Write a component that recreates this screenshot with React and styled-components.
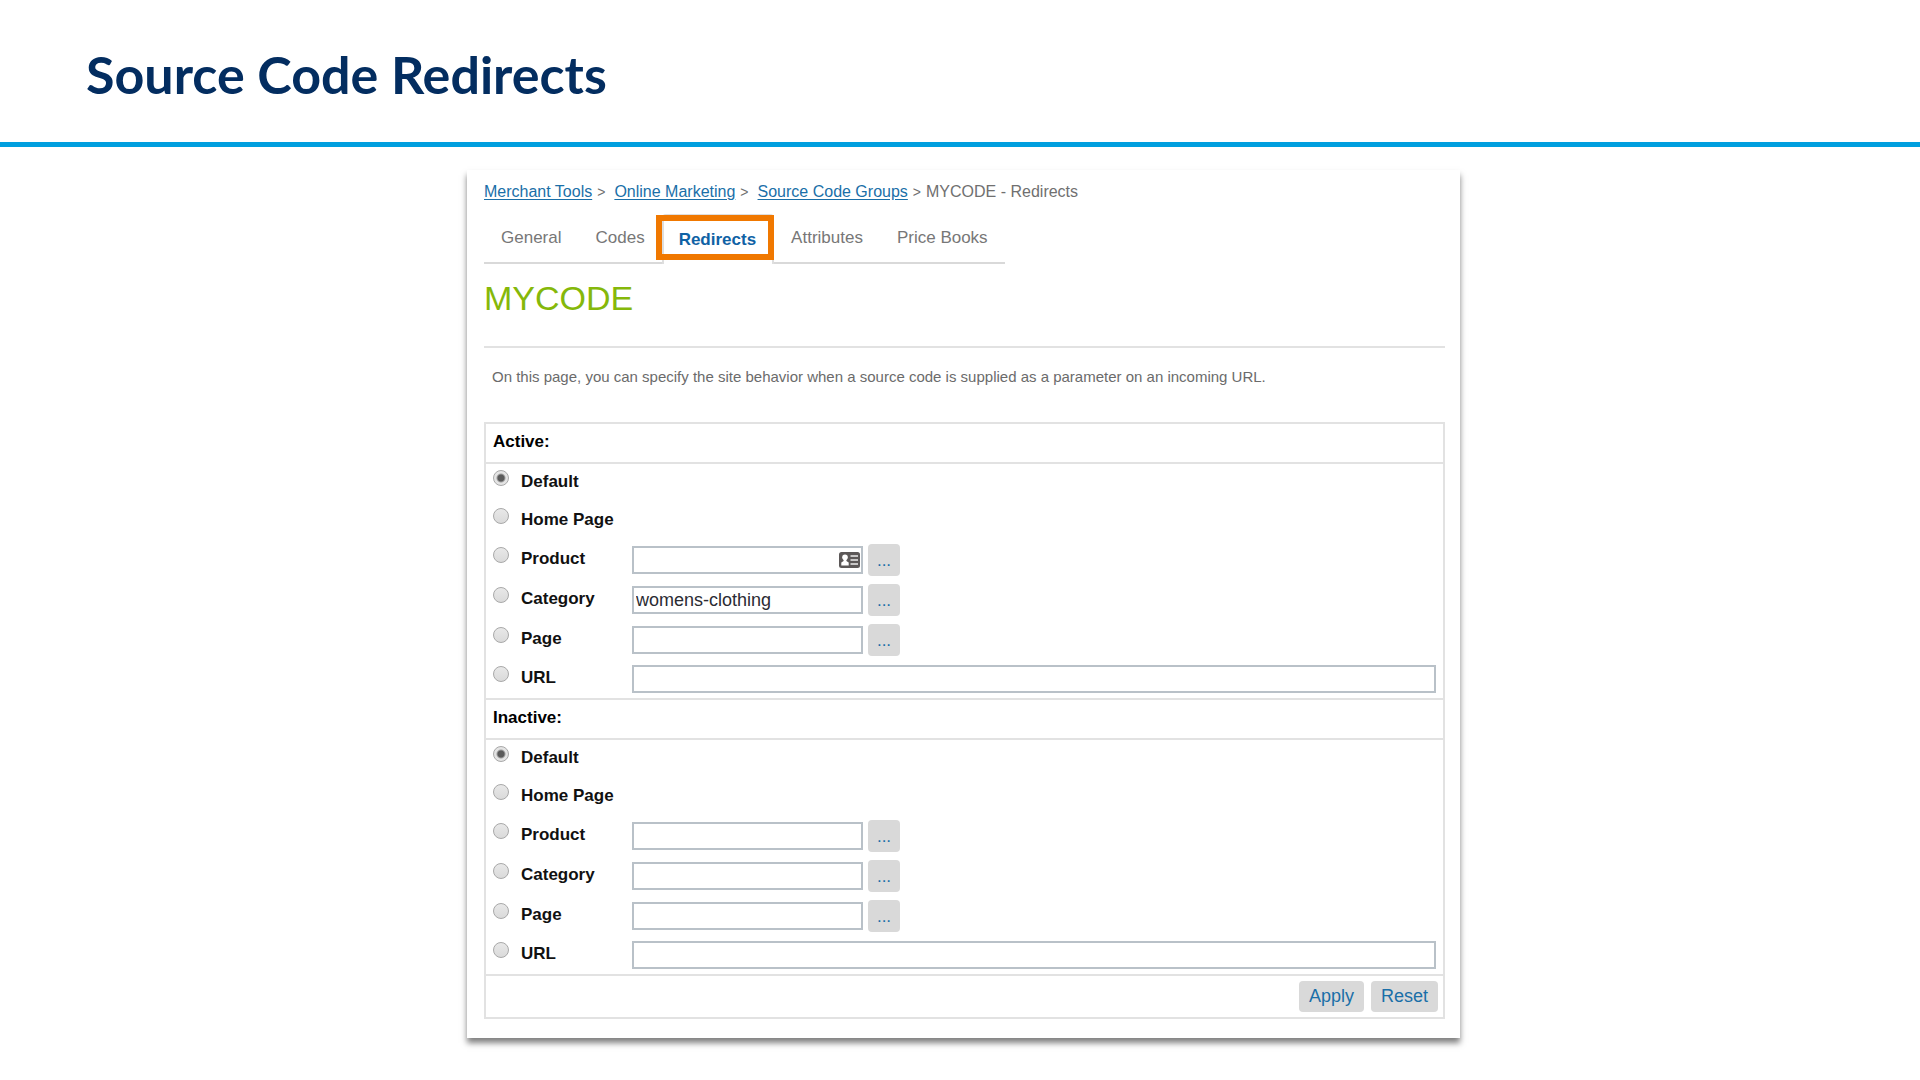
import React, { useState } from "react";
import styled, { createGlobalStyle } from "styled-components";

const GlobalStyle = createGlobalStyle`
  * {
    box-sizing: border-box;
  }
  body {
    margin: 0;
    background-color: white;
    font-family: "Liberation Sans", Arial, sans-serif;
  }
`;

const Header = styled.header`
  height: 147px;
  display: flex;
  align-items: center;
  padding: 6px 86px 0px;
  border-bottom: 5px solid #009fdf;
`;

const SlideTitle = styled.h1`
  margin: 0px;
  font-family: Lato, Carlito, Calibri, sans-serif;
  font-size: 52px;
  font-weight: 700;
  line-height: 60px;
  color: #032d60;
`;

const Main = styled.main`
  padding: 23px 460px 30px 467px;
`;

const Card = styled.section`
  padding: 10px 15px 19px 17px;
  background-color: white;
  box-shadow: 0px 5px 6px rgba(0, 0, 0, 0.5);
`;

const Breadcrumb = styled.nav`
  display: flex;
  gap: 5px;
  font-size: 16px;
  line-height: 24px;
  white-space: nowrap;
  color: #707070;
`;

const Crumb = styled.a`
  color: #1a6fa8;
  text-decoration: underline;
  text-underline-offset: 2px;
`;

const Separator = styled.span`
  font-size: 14px;
  margin-right: ${(props) => (props.$wide ? "4px" : "0px")};
`;

const Tabs = styled.nav`
  display: flex;
  width: fit-content;
  margin-top: 10px;
`;

const Tab = styled.a`
  position: relative;
  height: 50px;
  padding: 0px 17px;
  font-size: 17px;
  line-height: 48px;
  text-decoration: none;
  white-space: nowrap;
  font-weight: ${(props) => (props.$active ? 700 : 400)};
  color: ${(props) => (props.$active ? "#0f62a5" : "#777777")};
  border: 2px solid transparent;
  border-bottom-color: #d9d9d9;
  border-width: 0px 0px 2px;
  ${(props) =>
    props.$active &&
    `
    padding: 0px 16px 0px 15px;
    border-width: 2px 2px 0px;
    border-color: #dedede;
    border-radius: 4px 4px 0px 0px;
  `}
`;

const Highlight = styled.span`
  position: absolute;
  top: -1px;
  left: -8px;
  right: -2px;
  height: 45px;
  border: 6px solid #f07800;
`;

const GroupName = styled.h2`
  margin: 14px 0px 0px;
  padding-bottom: 28px;
  font-size: 34px;
  font-weight: 400;
  line-height: 40px;
  color: #85b80a;
  border-bottom: 2px solid #e2e2e2;
`;

const Description = styled.p`
  margin: 18px 8px 34px;
  font-size: 15px;
  line-height: 22px;
  color: #6b6b6b;
`;

const Form = styled.form`
  border: 2px solid #e2e2e2;
`;

const GroupTitle = styled.h3`
  margin: 0px;
  padding: 0px 7px;
  font-size: 17px;
  line-height: 36px;
  height: 40px;
  border-bottom: 2px solid #e2e2e2;
`;

const Options = styled.div`
  border-bottom: 2px solid #e2e2e2;
`;

const Row = styled.div`
  display: grid;
  grid-template-columns: 139px 1fr;
  align-items: center;
  height: ${(props) => (props.$tall ? "40px" : "38px")};
  padding: 0px 7px;
`;

const OptionLabel = styled.label`
  display: flex;
  align-items: center;
  gap: 12px;
  font-size: 17px;
  font-weight: 700;
  line-height: 20px;
  color: #111111;
`;

const OptionText = styled.span`
  padding-bottom: 2px;
`;

const Radio = styled.input`
  appearance: none;
  width: 16px;
  height: 16px;
  margin: 0px 0px 10px;
  border: 1px solid #a8a8a8;
  border-radius: 50%;
  background: linear-gradient(#e8e8e8, #dadada);
  &:checked {
    background: radial-gradient(circle, #5a5a5a 0px, #5a5a5a 3px, #e4e4e4 5px);
  }
`;

const Field = styled.div`
  display: flex;
  align-items: center;
  gap: 5px;
`;

const InputBox = styled.div`
  display: flex;
  align-items: center;
  flex: ${(props) => (props.$full ? "1" : "0 0 231px")};
  min-width: 0px;
  height: 28px;
  padding-right: 1px;
  border: 2px solid #b9c1c8;
`;

const TextInput = styled.input`
  flex: 1;
  width: 100%;
  min-width: 0px;
  height: 24px;
  padding: 0px 2px;
  border: none;
  outline: none;
  background: transparent;
  font-family: inherit;
  font-size: 18px;
  color: #2b2b33;
`;

const Button = styled.button`
  height: 31px;
  padding: 0px 10px;
  border: none;
  border-radius: 4px;
  background-color: #d9d9d9;
  font-family: inherit;
  font-size: 18px;
  color: #1a6fa8;
  cursor: pointer;
`;

const BrowseButton = styled(Button)`
  width: 32px;
  height: 32px;
  padding: 2px 0px 0px;
  font-size: 17px;
`;

const Footer = styled.div`
  display: flex;
  justify-content: flex-end;
  align-items: center;
  gap: 7px;
  height: 41px;
  padding: 0px 5px;
`;

const ContactIcon = () => (
  <svg width="21" height="16" viewBox="0 0 21 16" aria-hidden="true">
    <rect width="21" height="16" rx="2.5" fill="#5c5858" />
    <circle cx="6" cy="5.2" r="2.8" fill="#fff" />
    <path d="M4.600 6h2.800v3l2.300 1.600V13.500H2.300V10.600L4.600 9z" fill="#fff" />
    <path d="M11.500 4h7.500M11.500 8h7.500M11.500 12h7.500" stroke="#ececec" strokeWidth="1.700" />
  </svg>
);

const options = [
  { id: "default", label: "Default" },
  { id: "home", label: "Home Page" },
  { id: "product", label: "Product", field: "browse" },
  { id: "category", label: "Category", field: "browse" },
  { id: "page", label: "Page", field: "browse" },
  { id: "url", label: "URL", field: "full" },
];

const RedirectGroup = ({ name, title, initialValues = {}, contactField }) => {
  const [selected, setSelected] = useState("default");
  const [values, setValues] = useState(initialValues);

  return (
    <>
      <GroupTitle>{title}</GroupTitle>
      <Options>
        {options.map((option) => (
          <Row key={option.id} $tall={option.field === "browse"}>
            <OptionLabel>
              <Radio
                type="radio"
                name={name}
                checked={selected === option.id}
                onChange={() => setSelected(option.id)}
              />
              <OptionText>{option.label}</OptionText>
            </OptionLabel>
            {option.field && (
              <Field>
                <InputBox $full={option.field === "full"}>
                  <TextInput
                    type="text"
                    aria-label={`${title} ${option.label}`}
                    value={values[option.id] || ""}
                    onChange={(e) => setValues({ ...values, [option.id]: e.target.value })}
                  />
                  {contactField === option.id && <ContactIcon />}
                </InputBox>
                {option.field === "browse" && <BrowseButton type="button">...</BrowseButton>}
              </Field>
            )}
          </Row>
        ))}
      </Options>
    </>
  );
};

const App = () => {
  return (
    <>
      <GlobalStyle />
      <Header>
        <SlideTitle>Source Code Redirects</SlideTitle>
      </Header>
      <Main>
        <Card>
          <Breadcrumb>
            <Crumb href="#tools">Merchant Tools</Crumb>
            <Separator $wide>&gt;</Separator>
            <Crumb href="#marketing">Online Marketing</Crumb>
            <Separator $wide>&gt;</Separator>
            <Crumb href="#groups">Source Code Groups</Crumb>
            <Separator>&gt;</Separator>
            <span>MYCODE - Redirects</span>
          </Breadcrumb>
          <Tabs>
            <Tab href="#general">General</Tab>
            <Tab href="#codes">Codes</Tab>
            <Tab href="#redirects" $active>
              Redirects
              <Highlight />
            </Tab>
            <Tab href="#attributes">Attributes</Tab>
            <Tab href="#pricebooks">Price Books</Tab>
          </Tabs>
          <GroupName>MYCODE</GroupName>
          <Description>
            On this page, you can specify the site behavior when a source code is supplied as a parameter on an incoming URL.
          </Description>
          <Form onSubmit={(e) => e.preventDefault()}>
            <RedirectGroup
              name="active"
              title="Active:"
              initialValues={{ category: "womens-clothing" }}
              contactField="product"
            />
            <RedirectGroup name="inactive" title="Inactive:" />
            <Footer>
              <Button type="submit">Apply</Button>
              <Button type="reset">Reset</Button>
            </Footer>
          </Form>
        </Card>
      </Main>
    </>
  );
};

export default App;
